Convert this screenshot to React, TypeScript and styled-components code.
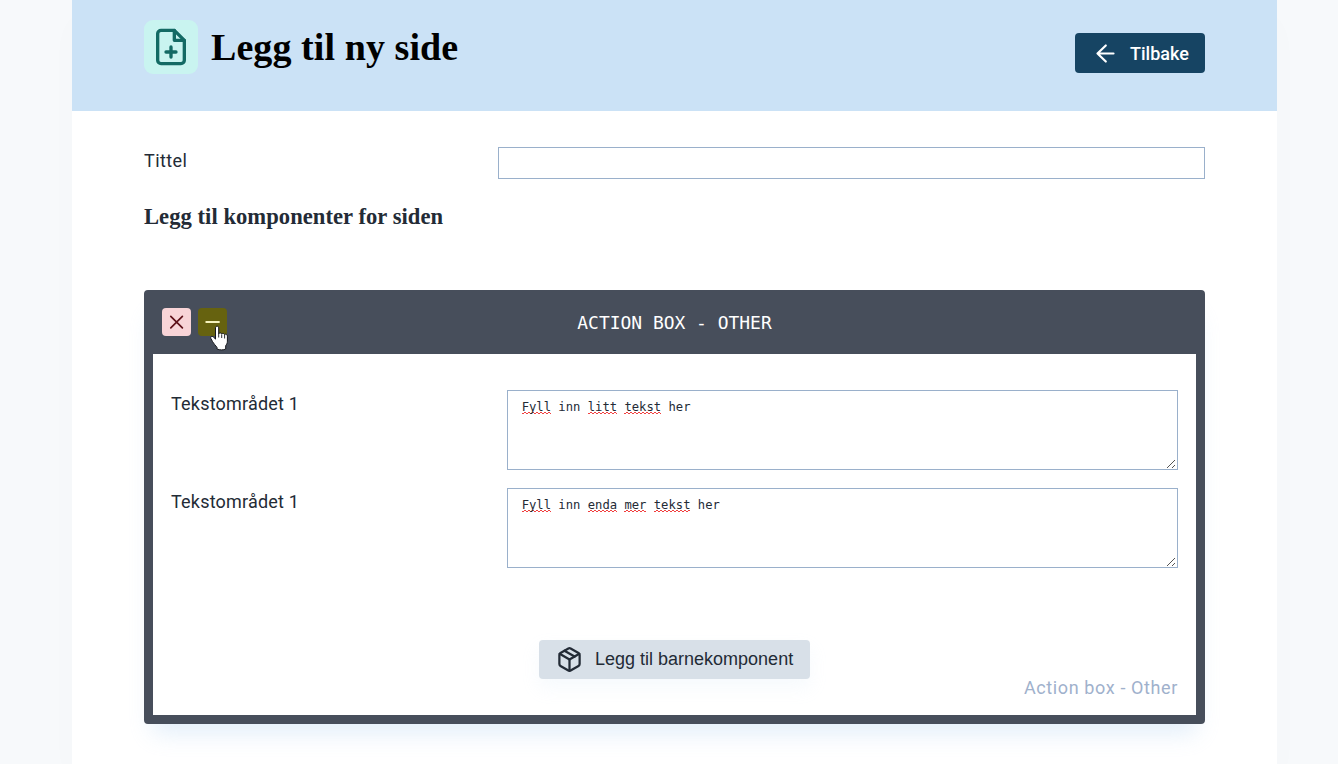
import React from "react";
import styled, { createGlobalStyle } from "styled-components";
import { FiFilePlus, FiPackage } from "react-icons/fi";

const GlobalStyle = createGlobalStyle`
  * { box-sizing: border-box; }
  html, body { margin: 0; height: 764px; overflow: hidden; }
  body {
    background: #f7f9fb;
    color: #232b36;
    font: 18px/27px Roboto, "Liberation Sans", sans-serif;
  }
`;

const Page = styled.main`
  width: 1205px;
  height: 764px;
  margin-left: 72px;
  background: #fff;
  box-shadow: 0 18px 36px rgba(0, 0, 0, 0.015);
`;

const Header = styled.header`
  height: 111px;
  padding: 20px 72px 0;
  display: flex;
  align-items: flex-start;
  background: #cbe2f6;
`;

const HeaderIcon = styled.div`
  width: 54px;
  height: 54px;
  display: grid;
  place-items: center;
  border-radius: 9px;
  background: #c9f4f0;
  color: #136a64;
`;

const PageTitle = styled.h1`
  margin: 0 auto 0 13px;
  color: #000;
  font: bold 38px/54px "Liberation Serif", serif;
  letter-spacing: 0.08px;
  white-space: nowrap;
`;

const BackButton = styled.button`
  width: 130px;
  height: 40px;
  margin-top: 13px;
  padding: 0 0 0 17px;
  display: flex;
  align-items: center;
  gap: 11px;
  border: 0;
  border-radius: 4px;
  background: #164463;
  color: #fff;
  font: 500 18px/27px Roboto, "Liberation Sans", sans-serif;
  white-space: nowrap;
`;

const Body = styled.div`
  padding: 36px 72px 0;
`;

const Row = styled.div`
  display: grid;
  grid-template-columns: 1fr 2fr;
  & + & { margin-top: 18px; }
`;

const Label = styled.label<{ $spacing?: number }>`
  letter-spacing: ${(p) => p.$spacing ?? 0.2}px;
  white-space: nowrap;
`;

const TextInput = styled.input`
  width: 100%;
  height: 32px;
  border: 1px solid #9ab0cb;
  background: #fff;
`;

const SectionTitle = styled.h2`
  margin: 24px 0 59px;
  font: bold 22.6px/28px "Liberation Serif", serif;
  letter-spacing: 0.04px;
`;

const Panel = styled.section`
  height: 434px;
  border: 9px solid #474e5b;
  border-radius: 4px;
  box-shadow: 0 18px 22px -9px rgba(190, 218, 243, 0.45);
`;

const PanelHeader = styled.div`
  height: 55px;
  padding: 9px 9px 0;
  display: grid;
  grid-template-columns: 100px 1fr 100px;
  background: #474e5b;
`;

const Controls = styled.div`
  display: flex;
  gap: 7px;
`;

const ControlButton = styled.button<{ $bg: string; $fg: string }>`
  position: relative;
  width: 29px;
  height: 28px;
  padding: 0;
  border: 0;
  border-radius: 4px;
  background: ${(p) => p.$bg};
  color: ${(p) => p.$fg};
  & > svg { display: block; }
`;

const Pointer = styled.svg`
  position: absolute;
  left: 12px;
  top: 17px;
`;

const PanelTitle = styled.div`
  color: #fff;
  text-align: center;
  font: 17.95px/29px "DejaVu Sans Mono", monospace;
`;

const PanelBody = styled.div`
  padding: 36px 18px 0;
`;

const TextArea = styled.div`
  position: relative;
  height: 80px;
  padding: 8px 14px;
  border: 1px solid #9ab0cb;
  font: 12.2px/16px "DejaVu Sans Mono", monospace;
  white-space: pre;
`;

const Misspelled = styled.span`
  background:
    linear-gradient(90deg, #f04040 50%, transparent 50%) 0 100% / 4px 1px repeat-x,
    linear-gradient(90deg, transparent 50%, #f04040 50%) 0 calc(100% - 1px) / 4px 1px repeat-x;
`;

const Grip = styled.svg`
  position: absolute;
  right: 1px;
  bottom: 0;
`;

const AddButton = styled.button`
  width: 271px;
  height: 39px;
  margin: 72px auto 0;
  padding: 0 0 0 17px;
  display: flex;
  align-items: center;
  gap: 12px;
  border: 0;
  border-radius: 4px;
  background: #d8e0e8;
  box-shadow: 0 9px 18px rgba(190, 218, 243, 0.14);
  color: #232b36;
  font: 18px/27px "Liberation Sans", sans-serif;
  white-space: nowrap;
`;

const PanelNote = styled.div`
  margin-top: -5px;
  color: #9fb1cc;
  text-align: right;
  letter-spacing: 0.62px;
`;

const Area = ({ words }: { words: [string, boolean][] }) => (
  <TextArea>
    {words.map(([w, wrong], i) => (
      <React.Fragment key={i}>
        {i > 0 && " "}
        {wrong ? <Misspelled>{w}</Misspelled> : <span>{w}</span>}
      </React.Fragment>
    ))}
    <Grip width="10" height="10" viewBox="0 0 10 10" stroke="#555" strokeWidth="1">
      <path d="M1 9 9 1M6 9 9 6" />
    </Grip>
  </TextArea>
);

export default function App() {
  return (
    <>
      <GlobalStyle />
      <Page>
        <Header>
          <HeaderIcon>
            <FiFilePlus size={40} />
          </HeaderIcon>
          <PageTitle>Legg til ny side</PageTitle>
          <BackButton>
            <svg width="27" height="27" viewBox="0 0 27 27" fill="none" stroke="currentColor" strokeWidth="2.2" strokeLinecap="round" strokeLinejoin="round">
              <path d="M21.5 13.5H5.5M13.800 5.500l-8.300 8 8.300 8" />
            </svg>
            Tilbake
          </BackButton>
        </Header>
        <Body>
          <Row>
            <Label $spacing={0.4}>Tittel</Label>
            <TextInput />
          </Row>
          <SectionTitle>Legg til komponenter for siden</SectionTitle>
          <Panel>
            <PanelHeader>
              <Controls>
                <ControlButton $bg="#f8d4d7" $fg="#5e1018">
                  <svg width="29" height="28" fill="none" stroke="currentColor" strokeWidth="1.7" strokeLinecap="round">
                    <path d="M8.8 8.3l11.6 11.6M20.4 8.3 8.8 19.9" />
                  </svg>
                </ControlButton>
                <ControlButton $bg="#66620f" $fg="#f6f3bd">
                  <svg width="29" height="28" fill="none" stroke="currentColor" strokeWidth="1.8" strokeLinecap="round">
                    <path d="M8.2 14h12.8" />
                  </svg>
                  <Pointer width="20" height="26" viewBox="0 0 20 26">
                    <path
                      d="M5.500 3c0-2.400 3.200-2.400 3.200 0v5.800c.5-1.300 2.700-1.200 3 .3.700-1.100 2.600-.8 2.900.6.900-1 2.800-.5 2.800 1.400v5c0 2.200-.8 3.200-1.700 4.600v3.300c-2 1.200-6 1.200-8.700 0v-1.600C5.500 20.600 3.700 18.500 2.600 16.700L.9 13.500c-.8-1.800.8-3 2.300-1.700l2.300 2.300z"
                      fill="#fff"
                      stroke="#15171c"
                      strokeWidth="1"
                    />
                    <path d="M8.700 8.500v4M11.700 9.500v3.500M14.600 10v3.500" stroke="#15171c" strokeWidth="0.9" />
                  </Pointer>
                </ControlButton>
              </Controls>
              <PanelTitle>ACTION BOX - OTHER</PanelTitle>
            </PanelHeader>
            <PanelBody>
              <Row>
                <Label>Tekstområdet 1</Label>
                <Area words={[["Fyll", true], ["inn", false], ["litt", true], ["tekst", true], ["her", false]]} />
              </Row>
              <Row>
                <Label>Tekstområdet 1</Label>
                <Area words={[["Fyll", true], ["inn", false], ["enda", true], ["mer", true], ["tekst", true], ["her", false]]} />
              </Row>
              <AddButton>
                <FiPackage size={27} />
                Legg til barnekomponent
              </AddButton>
              <PanelNote>Action box - Other</PanelNote>
            </PanelBody>
          </Panel>
        </Body>
      </Page>
    </>
  );
}
